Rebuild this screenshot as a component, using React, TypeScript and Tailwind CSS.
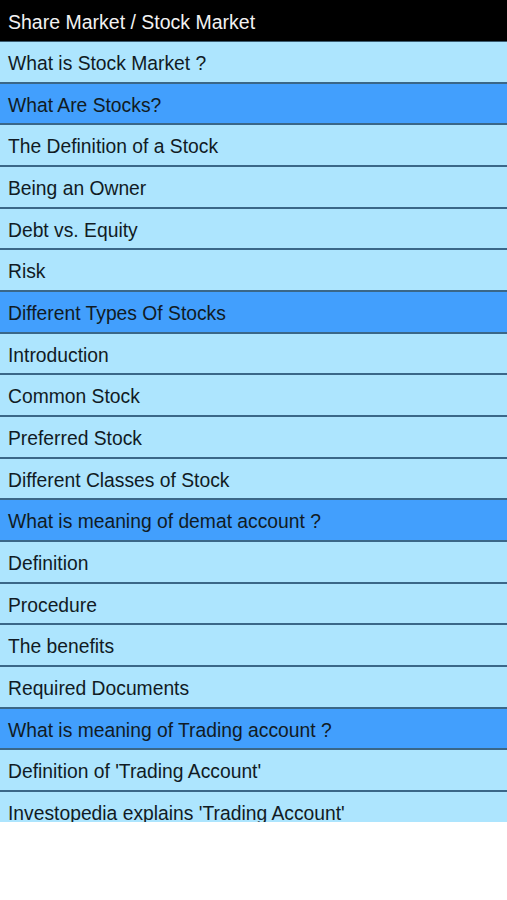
const items: { label: string; section?: boolean }[] = [
  { label: "What is Stock Market ?" },
  { label: "What Are Stocks?", section: true },
  { label: "The Definition of a Stock" },
  { label: "Being an Owner" },
  { label: "Debt vs. Equity" },
  { label: "Risk" },
  { label: "Different Types Of Stocks", section: true },
  { label: "Introduction" },
  { label: "Common Stock" },
  { label: "Preferred Stock" },
  { label: "Different Classes of Stock" },
  { label: "What is meaning of demat account ?", section: true },
  { label: "Definition" },
  { label: "Procedure" },
  { label: "The benefits" },
  { label: "Required Documents" },
  { label: "What is meaning of Trading account ?", section: true },
  { label: "Definition of 'Trading Account'" },
  { label: "Investopedia explains 'Trading Account'" },
];

export default function App() {
  return (
    <div className="w-[507px] h-[900px] bg-white font-['Liberation_Sans',Arial,sans-serif]">
      <div className="h-[822px] overflow-hidden flex flex-col">
        {/* Title bar */}
        <div className="h-[42px] shrink-0 bg-black flex items-center px-2 pt-1 border-b border-[#3b5b70]">
          <span className="text-[19.5px] text-[#f2f2f2]">Share Market / Stock Market</span>
        </div>

        {/* Topic list */}
        {items.map((item, i) => (
          <div
            key={i}
            className={
              item.section
                ? "h-[41.67px] shrink-0 flex items-center px-2 pt-1 bg-[#429ffd] border-b-2 border-[#3a6788]"
                : "h-[41.67px] shrink-0 flex items-center px-2 pt-1 bg-[#ade5fe] border-b-2 border-[#3a6788]"
            }
          >
            <span className="text-[19.3px] text-[#111b24] leading-none">{item.label}</span>
          </div>
        ))}
      </div>
    </div>
  );
}
